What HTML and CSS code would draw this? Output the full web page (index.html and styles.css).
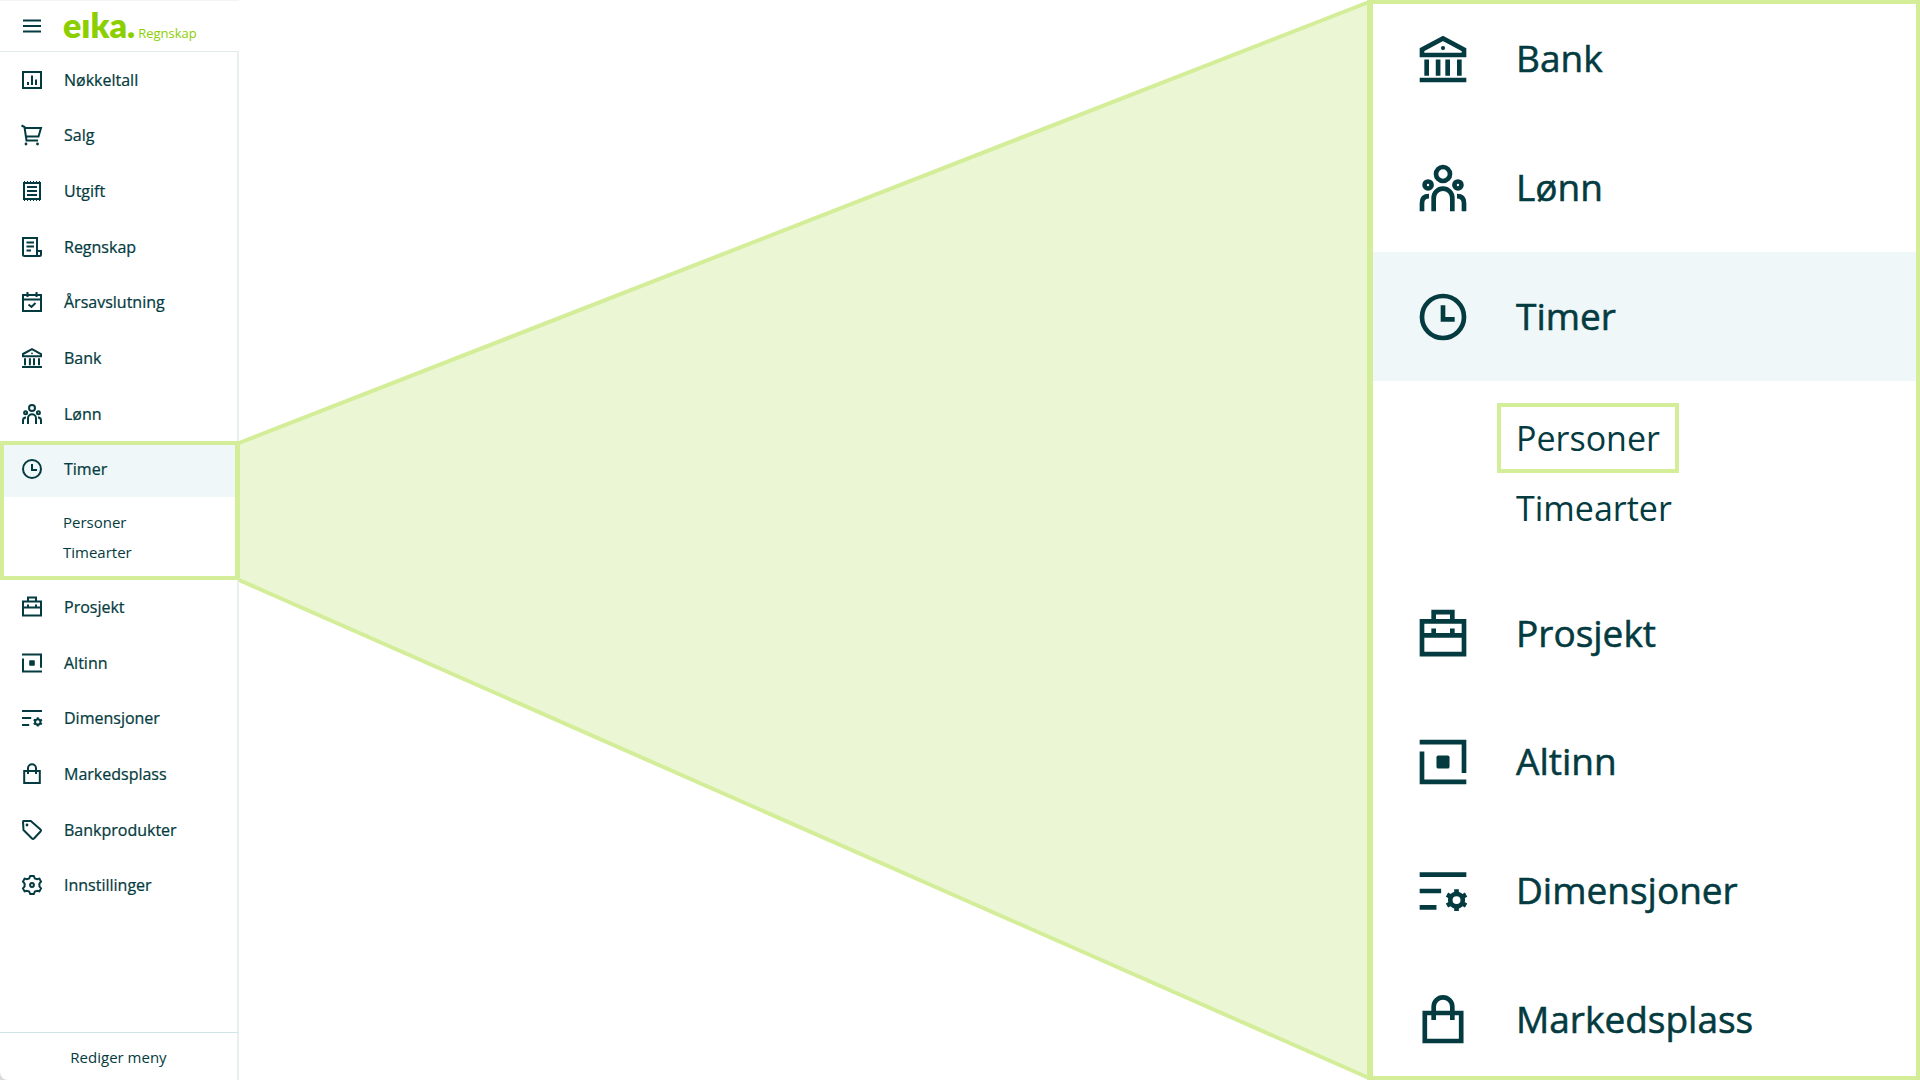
FILE: index.html
```html
<!DOCTYPE html>
<html lang="no">
<head>
<meta charset="utf-8">
<title>Eika Regnskap – Timer</title>
<link rel="stylesheet" href="styles.css">
</head>
<body>
<svg class="sprite" aria-hidden="true">
  <symbol id="i-menu" viewBox="0 0 24 24"><path d="M3 6.500H21M3 12H21M3 17.500H21"/></symbol>
  <symbol id="i-chart" viewBox="0 0 24 24"><path d="M3 4H21V20H3ZM8 17V14M12 17V7.500M16 17V11.500"/></symbol>
  <symbol id="i-cart" viewBox="0 0 24 24"><path d="M1.500 2.500L4.500 4L6.500 17.500H18M4.500 5H21L18.500 13.500H6"/><circle class="solid" cx="6" cy="21" r="1.400"/><circle class="solid" cx="17.500" cy="21" r="1.400"/></symbol>
  <symbol id="i-receipt" viewBox="0 0 24 24"><path d="M4 4V20M20 4V20M3 4H21M3 20H21M7 8H17M7 12H17M7 16H17"/><path class="teeth" d="M4 2.500H21M4 21.500H21"/></symbol>
  <symbol id="i-ledger" viewBox="0 0 24 24"><path d="M17 15V3H3V19.500Q3 21 4.500 21H19.500Q21 21 21 19.500V16H17V21M6.500 7.500H14M6.500 11.500H14M6.500 15.500H11"/></symbol>
  <symbol id="i-calendar" viewBox="0 0 24 24"><path d="M3 5H21V21H3ZM3 9.500H21M7.500 2V7M16.500 2V7M8.500 14.500L11.500 17L15.500 13"/></symbol>
  <symbol id="i-bank" viewBox="0 0 24 24"><path d="M3 8L12 3.200L21 8V10.300H3ZM5 12.200V19.200M9.900 12.200V19.200M14 12.200V19.200M19 12.200V19.200M2 21H22"/><circle class="solid" cx="12" cy="7.300" r=".9"/></symbol>
  <symbol id="i-people" viewBox="0 0 24 24"><circle cx="12" cy="6" r="3"/><circle cx="5.600" cy="10.700" r="1.500"/><circle cx="18.400" cy="10.700" r="1.500"/><path d="M8 22V16.300A4 4 0 0 1 16 16.300V22M3 22V18.500Q3 15.500 6 15.500M21 22V18.500Q21 15.500 18 15.500"/></symbol>
  <symbol id="i-clock" viewBox="0 0 24 24"><circle cx="12" cy="12" r="9"/><path d="M12 7V13H17"/></symbol>
  <symbol id="i-case" viewBox="0 0 24 24"><path d="M3 6.600H21V20.600H3ZM8 6.600V2.600H16V6.600M3 12.600H21M8 9.600V12.600M16 9.600V12.600"/></symbol>
  <symbol id="i-altinn" viewBox="0 0 24 24"><path d="M2 3.500H21V16.700M3 7.500V20.500H22"/><rect class="solid" x="9.200" y="9.200" width="5.600" height="5.600" rx=".8"/></symbol>
  <symbol id="i-dimensions" viewBox="0 0 24 24"><path d="M2 5H22M2 12H11.200M2 19H9.200"/><circle cx="17.800" cy="15.900" r="2.700"/><path d="M17.800 13.200V11.200M17.800 18.600V20.600M15.500 14.550L13.700 13.550M20.100 17.250L21.900 18.250M15.500 17.250L13.700 18.250M20.100 14.550L21.900 13.550"/></symbol>
  <symbol id="i-bag" viewBox="0 0 24 24"><path d="M4.200 9H19.800V21H4.200ZM8 12V6.300A4 4 0 0 1 16 6.300V12"/></symbol>
  <symbol id="i-tag" viewBox="0 0 24 24"><path d="M3 3.500Q3 3 3.500 3H10.800L20.500 11.600Q21.500 12.500 20.500 13.500L14 20.500Q13 21.500 12 20.500L3.500 12Z"/><circle class="solid" cx="7" cy="7" r="1.400"/></symbol>
  <symbol id="i-gear" viewBox="0 0 24 24"><circle cx="12" cy="12" r="1.900"/><path d="M10.200 3H13.800L14.800 5.500L17.200 6.200L19.400 5.600L21 8.600L19.400 10.600V13.400L21 15.400L19.400 18.400L17.200 17.800L14.800 18.500L13.800 21H10.200L9.200 18.500L6.800 17.800L4.600 18.400L3 15.400L4.600 13.400V10.600L3 8.600L4.600 5.600L6.800 6.200L9.200 5.500Z"/></symbol>
</svg>

<div class="layout">
  <aside class="sidebar">
    <header class="brand">
      <button class="menu-button" type="button" aria-label="Meny"><svg class="icon"><use href="#i-menu"/></svg></button>
      <a class="logo" href="#"><span class="logo-name">eıka.</span><span class="logo-product">Regnskap</span></a>
    </header>
    <nav class="nav" aria-label="Hovedmeny">
      <a class="item" href="#"><svg class="icon"><use href="#i-chart"/></svg>Nøkkeltall</a>
      <a class="item" href="#"><svg class="icon"><use href="#i-cart"/></svg>Salg</a>
      <a class="item" href="#"><svg class="icon"><use href="#i-receipt"/></svg>Utgift</a>
      <a class="item" href="#"><svg class="icon"><use href="#i-ledger"/></svg>Regnskap</a>
      <a class="item" href="#"><svg class="icon"><use href="#i-calendar"/></svg>Årsavslutning</a>
      <a class="item" href="#"><svg class="icon"><use href="#i-bank"/></svg>Bank</a>
      <a class="item" href="#"><svg class="icon"><use href="#i-people"/></svg>Lønn</a>
      <div class="group marked">
        <a class="item active" href="#"><svg class="icon"><use href="#i-clock"/></svg>Timer</a>
        <div class="sub"><a href="#">Personer</a><a href="#">Timearter</a></div>
      </div>
      <a class="item" href="#"><svg class="icon"><use href="#i-case"/></svg>Prosjekt</a>
      <a class="item" href="#"><svg class="icon"><use href="#i-altinn"/></svg>Altinn</a>
      <a class="item" href="#"><svg class="icon"><use href="#i-dimensions"/></svg>Dimensjoner</a>
      <a class="item" href="#"><svg class="icon"><use href="#i-bag"/></svg>Markedsplass</a>
      <a class="item" href="#"><svg class="icon"><use href="#i-tag"/></svg>Bankprodukter</a>
      <a class="item" href="#"><svg class="icon"><use href="#i-gear"/></svg>Innstillinger</a>
    </nav>
    <footer class="footer"><button class="edit" type="button">Rediger meny</button></footer>
  </aside>

  <svg class="beam" viewBox="0 0 1128 1080" preserveAspectRatio="none" aria-hidden="true">
    <path class="beam-fill" d="M0 443L1130 2V1078L0 580Z"/>
    <path class="beam-edge" d="M0 443L1130 2M0 580L1130 1078"/>
  </svg>

  <section class="magnifier" aria-label="Utsnitt av menyen">
    <nav class="nav nav-large" aria-label="Forstørret meny">
      <a class="item" href="#"><svg class="icon"><use href="#i-bank"/></svg>Bank</a>
      <a class="item" href="#"><svg class="icon"><use href="#i-people"/></svg>Lønn</a>
      <div class="group">
        <a class="item active" href="#"><svg class="icon"><use href="#i-clock"/></svg>Timer</a>
        <div class="sub"><a class="target" href="#">Personer</a><a href="#">Timearter</a></div>
      </div>
      <a class="item" href="#"><svg class="icon"><use href="#i-case"/></svg>Prosjekt</a>
      <a class="item" href="#"><svg class="icon"><use href="#i-altinn"/></svg>Altinn</a>
      <a class="item" href="#"><svg class="icon"><use href="#i-dimensions"/></svg>Dimensjoner</a>
      <a class="item" href="#"><svg class="icon"><use href="#i-bag"/></svg>Markedsplass</a>
    </nav>
  </section>
</div>
</body>
</html>
```
FILE: styles.css
```css
:root {
  --ink: #043b40;
  --lime: #d3ed99;
  --lime-pale: #ebf7d4;
  --brand: #8ccf00;
  --line: #e0ebeb;
}

* { box-sizing: border-box; }

body {
  margin: 0;
  background: #fff;
  color: var(--ink);
  font-family: "Open Sans", "Noto Sans", sans-serif;
}

a { color: inherit; text-decoration: none; }

button {
  padding: 0;
  border: 0;
  background: none;
  color: inherit;
  font: inherit;
}

.sprite { display: none; }

.layout {
  display: grid;
  grid-template-columns: 239px 1fr 553px;
  height: 100vh;
  overflow: hidden;
}

/* Menu column */
.sidebar {
  display: flex;
  flex-direction: column;
  min-height: 0;
  background: #d8dadb;
}

.brand {
  display: flex;
  align-items: center;
  gap: 19px;
  height: 52px;
  padding-left: 20px;
  border-top: 1px solid #f4f4f4;
  border-bottom: 1px solid var(--line);
  background: #fff;
}

.menu-button { display: flex; }

.logo {
  display: flex;
  align-items: baseline;
  gap: 3px;
  padding-top: 6px;
  color: var(--brand);
  line-height: 40px;
}

.logo-name {
  font-family: Lato, sans-serif;
  font-size: 34px;
  font-weight: 800;
}

.logo-product { font-size: 13px; }

.icon {
  flex: none;
  width: 24px;
  height: 24px;
  fill: none;
  stroke: currentColor;
  stroke-width: 2;
}

.solid { fill: currentColor; stroke: none; }
.teeth { stroke-width: 1; stroke-dasharray: 1 2; }

.nav {
  display: flex;
  flex: 1;
  flex-direction: column;
  min-height: 0;
  padding-bottom: 119px;
  border-right: 2px solid #e9eff0;
  background: #fff;
  font-size: 16px;
}

.item {
  display: flex;
  flex: 1 0 0;
  align-items: center;
  gap: 20px;
  padding-left: 20px;
  font-weight: 500;
  -webkit-text-stroke: 0.015em currentColor;
}

.group {
  position: relative;
  display: flex;
  flex: 1 0 82px;
  flex-direction: column;
}

.active { background: #eff7f9; }

.sub {
  display: flex;
  flex: none;
  flex-direction: column;
  align-items: flex-start;
  height: 82px;
  padding: 10px 0 0 63px;
  font-size: 15px;
  line-height: 30px;
}

.marked::after {
  content: "";
  position: absolute;
  inset: 0 -3px -1px 0;
  border: 4px solid var(--lime);
  border-right-width: 5px;
}

.footer {
  display: flex;
  justify-content: center;
  height: 48px;
  border-top: 1px solid #cfe3ea;
  border-right: 2px solid #e9eff0;
  border-bottom-left-radius: 8px;
  background: #fff;
}

.edit { font-size: 15px; }

/* Callout between the menu and its enlargement */
.beam {
  width: 100%;
  height: 100%;
  min-height: 0;
  overflow: visible;
}

.beam-fill { fill: var(--lime-pale); }
.beam-edge { fill: none; stroke: var(--lime); stroke-width: 4; }

.magnifier {
  position: relative;
  display: flex;
  flex-direction: column;
  min-height: 0;
  overflow: hidden;
  border: 4px solid var(--lime);
  border-left-width: 6px;
  background: #fff;
}

.nav-large {
  margin: -9px 0 -8px;
  padding: 0;
  border: 0;
  font-size: 37px;
}

.nav-large .item {
  gap: 45px;
  padding: 0 0 3px 42px;
  -webkit-text-stroke-width: 0.015em;
}

.nav-large .icon {
  width: 56px;
  height: 56px;
  margin-top: 3px;
}

.nav-large .group { flex-basis: 191px; }

.nav-large .sub {
  height: 188px;
  padding: 22px 0 0 143px;
  font-size: 34px;
  line-height: 70px;
}

.nav-large .target {
  margin-left: -19px;
  padding: 0 15px;
  border: 4px solid var(--lime);
  line-height: 62px;
}
```
